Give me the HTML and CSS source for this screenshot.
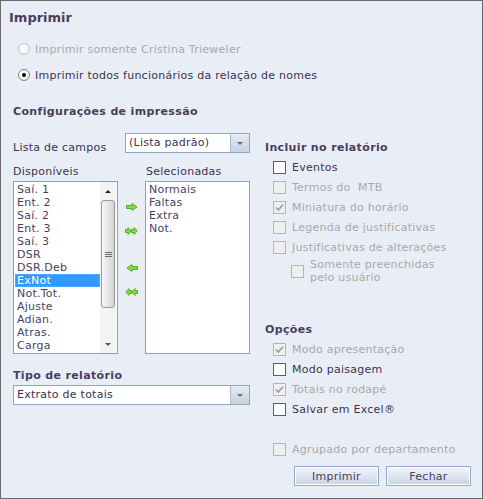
FILE: index.html
```html
<!DOCTYPE html>
<html lang="pt">
<head>
<meta charset="utf-8">
<title>Imprimir</title>
<link rel="stylesheet" href="styles.css">
</head>
<body>
<div class="win">
  <h1 class="title">Imprimir</h1>
  <div class="radio-row dis"><span class="radio"></span><span>Imprimir somente Cristina Trieweler</span></div>
  <div class="radio-row second"><span class="radio checked"></span><span>Imprimir todos funcionários da relação de nomes</span></div>
  <h2 class="section">Configurações de impressão</h2>
  <div class="cols">
    <div class="left">
      <div class="field-row">
        <span class="label">Lista de campos</span>
        <div class="select small"><span class="val">(Lista padrão)</span><span class="btn"><i class="tri"></i></span></div>
      </div>
      <div class="list-grid labels">
        <span>Disponíveis</span><span></span><span class="lbl2">Selecionadas</span>
      </div>
      <div class="list-grid lists">
        <div class="listbox">
          <ul class="items">
            <li>Saí. 1</li><li>Ent. 2</li><li>Saí. 2</li><li>Ent. 3</li><li>Saí. 3</li><li>DSR</li><li>DSR.Deb</li><li class="selected">ExNot</li><li>Not.Tot.</li><li>Ajuste</li><li>Adian.</li><li>Atras.</li><li>Carga</li>
          </ul>
          <div class="sb">
            <div class="sb-btn"><i class="tri-up"></i></div>
            <div class="sb-thumb"><i class="grip"></i><i class="grip"></i><i class="grip"></i></div>
            <div class="sb-space"></div>
            <div class="sb-btn"><i class="tri-down"></i></div>
          </div>
        </div>
        <div class="arrows">
          <svg class="a1" width="12" height="8" viewBox="0 0 12 8"><polygon points="0.5,2.5 6,2.5 6,0.5 11,4 6,7.5 6,5.5 0.5,5.5"/></svg>
          <svg class="a2" width="13" height="8" viewBox="0 0 13 8"><polygon points="0.5,2.5 3,2.5 3,0.5 6.2,4 3,7.5 3,5.5 0.5,5.5"/><polygon points="6.5,2.5 9,2.5 9,0.5 12.2,4 9,7.5 9,5.5 6.5,5.5"/></svg>
          <svg class="a3" width="12" height="8" viewBox="0 0 12 8"><polygon points="11.5,2.5 6,2.5 6,0.5 1,4 6,7.5 6,5.5 11.5,5.5"/></svg>
          <svg class="a4" width="13" height="8" viewBox="0 0 13 8"><polygon points="12.5,2.5 10,2.5 10,0.5 6.8,4 10,7.5 10,5.5 12.5,5.5"/><polygon points="6.5,2.5 4,2.5 4,0.5 0.8,4 4,7.5 4,5.5 6.5,5.5"/></svg>
        </div>
        <div class="listbox">
          <ul class="items">
            <li>Normais</li><li>Faltas</li><li>Extra</li><li>Not.</li>
          </ul>
        </div>
      </div>
      <h2 class="section tipo">Tipo de relatório</h2>
      <div class="select wide"><span class="val">Extrato de totais</span><span class="btn"><i class="tri"></i></span></div>
    </div>
    <div class="right">
      <h2 class="section rh">Incluir no relatório</h2>
      <div class="chk"><span class="box"></span><span>Eventos</span></div>
      <div class="chk dis"><span class="box"></span><span>Termos do&nbsp; MTB</span></div>
      <div class="chk dis"><span class="box"><svg width="11" height="11" viewBox="0 0 11 11"><polyline points="2,5.5 4.3,8 9,2.8"/></svg></span><span>Miniatura do horário</span></div>
      <div class="chk dis"><span class="box"></span><span>Legenda de justificativas</span></div>
      <div class="chk dis"><span class="box"></span><span>Justificativas de alterações</span></div>
      <div class="chk dis sub"><span class="box"></span><span>Somente preenchidas<br>pelo usuário</span></div>
      <h2 class="section rh opc">Opções</h2>
      <div class="chk dis"><span class="box"><svg width="11" height="11" viewBox="0 0 11 11"><polyline points="2,5.5 4.3,8 9,2.8"/></svg></span><span>Modo apresentação</span></div>
      <div class="chk"><span class="box"></span><span>Modo paisagem</span></div>
      <div class="chk dis"><span class="box"><svg width="11" height="11" viewBox="0 0 11 11"><polyline points="2,5.5 4.3,8 9,2.8"/></svg></span><span>Totais no rodapé</span></div>
      <div class="chk"><span class="box"></span><span>Salvar em Excel®</span></div>
      <div class="chk dis agr"><span class="box"></span><span>Agrupado por departamento</span></div>
      <div class="buttons">
        <button class="button">Imprimir</button>
        <button class="button">Fechar</button>
      </div>
    </div>
  </div>
</div>
</body>
</html>
```
FILE: styles.css
```css
html, body { margin: 0; padding: 0; background: #e9eef6; }
.win {
  width: 483px; height: 499px; box-sizing: border-box;
  border: 1px solid #6a6a6a; background: #e9eef6;
  padding: 9px 11px 0 12px;
  font-family: "DejaVu Sans", sans-serif; font-size: 11px; letter-spacing: 0.25px;
  color: #3a3350;
}
.title {
  margin: 0 0 0 -4px; font-size: 13px; line-height: 16px; font-weight: bold;
  color: #4b3d5d; letter-spacing: 0;
}
.radio-row { display: flex; align-items: center; height: 20px; margin-top: 13px; padding-left: 5px; gap: 5px; }
.radio-row.second { margin-top: 6px; }
.radio {
  width: 12px; height: 12px; box-sizing: border-box; border-radius: 50%;
  border: 1px solid #858585; background: radial-gradient(circle at 40% 40%, #ffffff 30%, #dcdcdc 100%);
  display: flex; align-items: center; justify-content: center;
}
.radio.checked::after { content: ""; width: 4px; height: 4px; border-radius: 50%; background: #000; }
.dis { color: #a8a8a8; }
.dis .radio { border-color: #c2c2c2; background: radial-gradient(circle at 40% 40%, #fbfbfb 30%, #e6e6e6 100%); }
.section {
  margin: 17px 0 0; font-size: 11px; line-height: 20px; font-weight: bold;
  color: #4b3d5d; letter-spacing: 0.35px;
}
.cols { display: flex; gap: 15px; }
.left { width: 237px; }
.right { width: 206px; }
.field-row { display: flex; justify-content: space-between; margin-top: 11px; }
.label { padding-top: 8px; line-height: 14px; }
.select {
  height: 20px; box-sizing: border-box; border: 1px solid #8fa5c3; background: #fff;
  display: flex;
}
.select.small { width: 125px; }
.select.wide { width: 237px; }
.select .val { flex: 1; padding-left: 3px; line-height: 18px; white-space: nowrap; overflow: hidden; }
.select .btn {
  width: 18px; border-left: 1px solid #a7b8cf;
  background: linear-gradient(#e6ecf3, #c6d2e0);
  display: flex; align-items: center; justify-content: center;
}
.tri { width: 0; height: 0; border-left: 3px solid transparent; border-right: 3px solid transparent; border-top: 3px solid #6b6b7b; margin-top: 1px; }
.list-grid { display: grid; grid-template-columns: 105px 27px 105px; }
.labels { margin-top: 7px; line-height: 19px; }
.lbl2 { padding-left: 1px; }
.listbox {
  height: 173px; box-sizing: border-box; border: 1px solid #8c9fbc; background: #fff;
  display: flex;
}
.items { flex: 1; margin: 0; padding: 1px 0 0 1px; list-style: none; }
.items li { line-height: 13px; padding-left: 2px; white-space: nowrap; color: #4a3f63; }
.items li.selected { background: #3399ff; color: #fff; outline: 1px dotted #d9a441; outline-offset: -1px; }
.sb { width: 16px; margin-right: 1px; background: #f3f3f3; display: flex; flex-direction: column; }
.sb-btn { height: 18px; display: flex; align-items: center; justify-content: center; }
.tri-up { width: 0; height: 0; border-left: 3px solid transparent; border-right: 3px solid transparent; border-bottom: 3px solid #222; }
.tri-down { width: 0; height: 0; border-left: 3px solid transparent; border-right: 3px solid transparent; border-top: 3px solid #555; }
.sb-thumb {
  height: 108px; box-sizing: border-box; margin: 0 1px; border: 1px solid #9a9a9a; border-radius: 3px;
  background: linear-gradient(90deg, #f7f7f7, #e2e2e2 60%, #d4d4d4);
  display: flex; flex-direction: column; align-items: center; justify-content: center; gap: 1px;
}
.grip { width: 7px; height: 1px; background: #6e6e6e; }
.sb-space { flex: 1; }
.arrows { display: flex; flex-direction: column; align-items: center; padding-top: 22px; }
.arrows svg { display: block; }
.arrows polygon { fill: #86dd3e; stroke: #4fb020; stroke-width: 1; stroke-linejoin: round; }
.a2, .a4 { margin-top: 16px; }
.a3 { margin-top: 29px; }
.section.tipo { margin-top: 13px; line-height: 18px; }
.section.rh { margin-top: 17px; line-height: 18px; }
.section.opc { margin-top: 37px; }
.chk { display: flex; align-items: center; height: 20px; padding-left: 8px; gap: 6px; white-space: nowrap; }
.chk .box {
  width: 13px; height: 13px; box-sizing: border-box; border: 1px solid #5f5f5f; background: #fff;
  display: flex; align-items: center; justify-content: center; flex: none;
}
.chk.dis .box { border-color: #b5b5b5; background: #efefef; }
.chk svg { display: block; }
.chk polyline { fill: none; stroke: #9c9c9c; stroke-width: 1.7; }
.chk.sub { height: auto; line-height: 13px; padding-left: 26px; margin-top: 1px; }
.chk.agr { margin-top: 20px; }
.buttons { display: flex; justify-content: flex-end; gap: 7px; margin-top: 7px; }
.button {
  width: 85px; height: 20px; box-sizing: border-box; margin: 0; padding: 0;
  border: 1px solid #93abcb; box-shadow: inset 0 0 0 1px #ffffff;
  background: linear-gradient(#f2f5f9, #dfe6ef 50%, #c6d3e4);
  font-family: "DejaVu Sans", sans-serif; font-size: 11px; letter-spacing: 0.25px; color: #4b3d5d;
}
```
